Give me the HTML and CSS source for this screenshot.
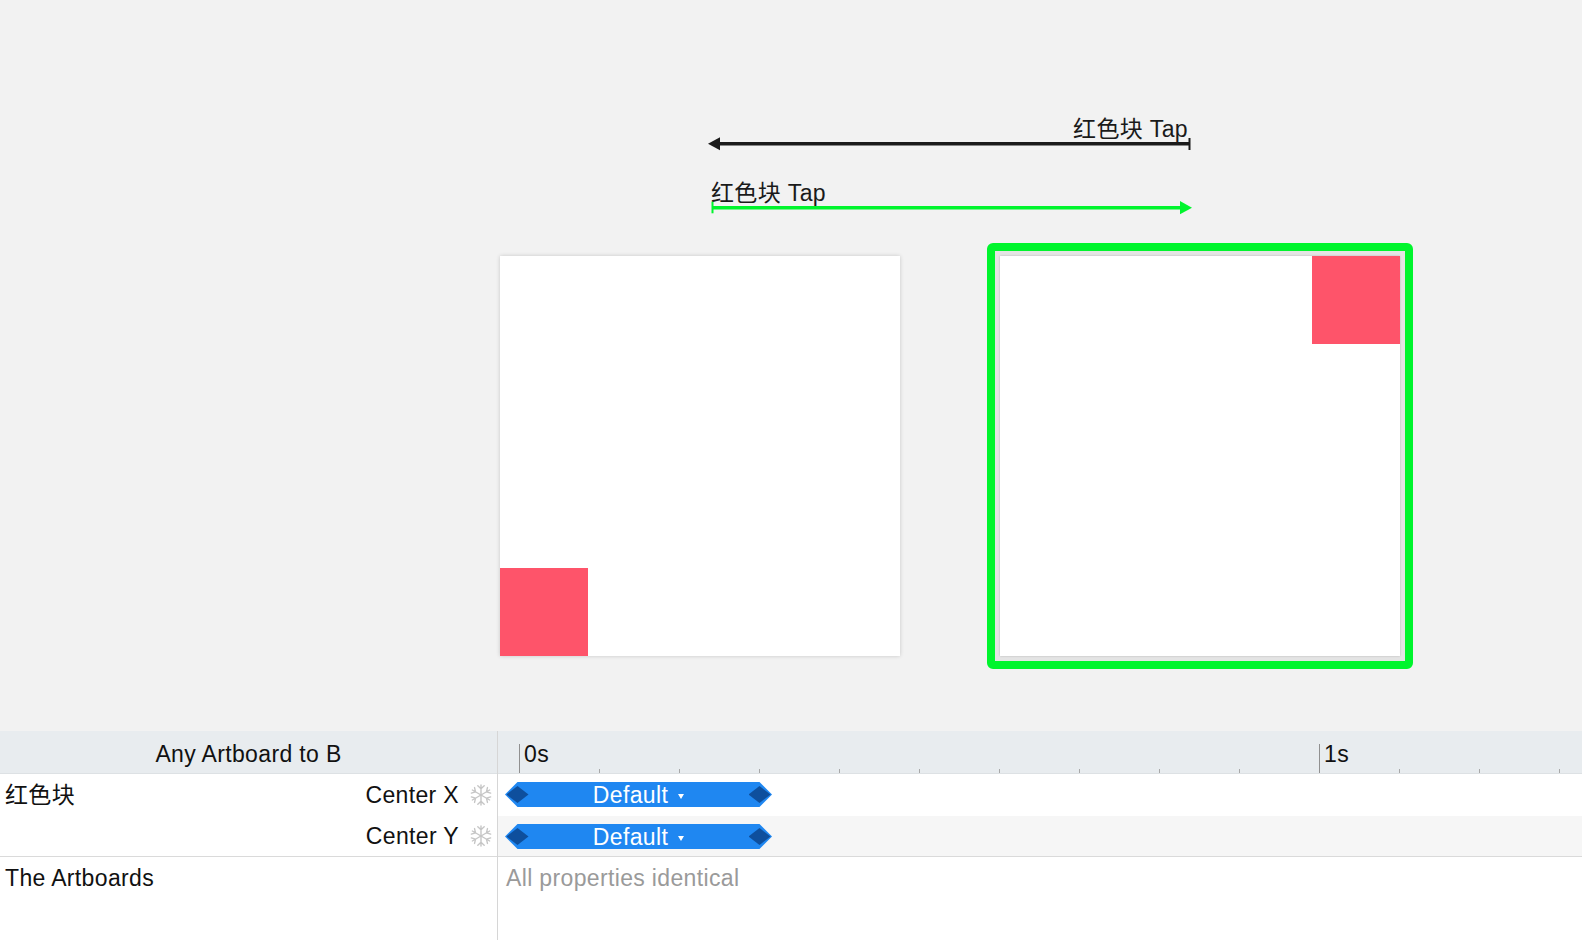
FILE: index.html
```html
<!DOCTYPE html>
<html lang="zh">
<head>
<meta charset="utf-8">
<title>Any Artboard to B</title>
<link rel="stylesheet" href="styles.css">
</head>
<body>
<div class="app">
  <div class="canvas">
    <div class="conn conn-back">
      <div class="conn-label">红色块 Tap</div>
      <svg class="conn-line" width="496" height="14" viewBox="0 0 496 14">
        <line x1="18" y1="6.7" x2="489.5" y2="6.7" stroke="#1b1b1b" stroke-width="3.5"/>
        <polygon points="8,6.7 20,0.2 20,13.2" fill="#1b1b1b"/>
        <line x1="489.5" y1="1" x2="489.5" y2="13" stroke="#1b1b1b" stroke-width="2"/>
      </svg>
    </div>
    <div class="conn conn-fwd">
      <div class="conn-label">红色块 Tap</div>
      <svg class="conn-line" width="496" height="16" viewBox="0 0 496 16">
        <line x1="12.5" y1="1.7" x2="12.5" y2="13.3" stroke="#00f52d" stroke-width="2"/>
        <line x1="12" y1="7.7" x2="482" y2="7.7" stroke="#00f52d" stroke-width="3.5"/>
        <polygon points="492,7.7 480,1.1 480,14.3" fill="#00f52d"/>
      </svg>
    </div>
    <div class="artboard artboard-a"><div class="block"></div></div>
    <div class="ring">
      <div class="artboard artboard-b"><div class="block"></div></div>
    </div>
  </div>

  <div class="timeline">
    <div class="col col-left">
      <div class="head head-title">Any Artboard to B</div>
      <div class="row row-1">
        <span class="layer">红色块</span>
        <span class="prop">Center X
          <svg class="snow" width="22" height="22" viewBox="-11 -11 22 22">
            <g stroke="#c6c6c6" stroke-width="1.4" fill="none" stroke-linecap="round">
              <path d="M0 0V-10M0-6.3L-3.2-9.3M0-6.3L3.2-9.3"/>
              <path transform="rotate(60)" d="M0 0V-10M0-6.3L-3.2-9.3M0-6.3L3.2-9.3"/>
              <path transform="rotate(120)" d="M0 0V-10M0-6.3L-3.2-9.3M0-6.3L3.2-9.3"/>
              <path transform="rotate(180)" d="M0 0V-10M0-6.3L-3.2-9.3M0-6.3L3.2-9.3"/>
              <path transform="rotate(240)" d="M0 0V-10M0-6.3L-3.2-9.3M0-6.3L3.2-9.3"/>
              <path transform="rotate(300)" d="M0 0V-10M0-6.3L-3.2-9.3M0-6.3L3.2-9.3"/>
            </g>
          </svg>
        </span>
      </div>
      <div class="row row-2">
        <span class="layer"></span>
        <span class="prop">Center Y
          <svg class="snow" width="22" height="22" viewBox="-11 -11 22 22">
            <g stroke="#c6c6c6" stroke-width="1.4" fill="none" stroke-linecap="round">
              <path d="M0 0V-10M0-6.3L-3.2-9.3M0-6.3L3.2-9.3"/>
              <path transform="rotate(60)" d="M0 0V-10M0-6.3L-3.2-9.3M0-6.3L3.2-9.3"/>
              <path transform="rotate(120)" d="M0 0V-10M0-6.3L-3.2-9.3M0-6.3L3.2-9.3"/>
              <path transform="rotate(180)" d="M0 0V-10M0-6.3L-3.2-9.3M0-6.3L3.2-9.3"/>
              <path transform="rotate(240)" d="M0 0V-10M0-6.3L-3.2-9.3M0-6.3L3.2-9.3"/>
              <path transform="rotate(300)" d="M0 0V-10M0-6.3L-3.2-9.3M0-6.3L3.2-9.3"/>
            </g>
          </svg>
        </span>
      </div>
      <div class="row row-art">The Artboards</div>
    </div>

    <div class="col col-right">
      <div class="head ruler">
        <div class="sec">0s</div>
        <div class="sec">1s</div>
      </div>
      <div class="row row-1 track">
        <div class="bar"><span class="bar-text">Default</span><i class="caret"></i></div>
      </div>
      <div class="row row-2 track alt">
        <div class="bar"><span class="bar-text">Default</span><i class="caret"></i></div>
      </div>
      <div class="row row-art note">All properties identical</div>
    </div>
  </div>
</div>
</body>
</html>
```

FILE: styles.css
```css
* { box-sizing: border-box; }

html, body {
  margin: 0;
  padding: 0;
}

body {
  width: 1582px;
  height: 940px;
  overflow: hidden;
  font-family: "Liberation Sans", "Noto Sans CJK SC", sans-serif;
  font-size: 23px;
  letter-spacing: 0.35px;
  color: #111;
  background: #f2f2f2;
}

.app {
  display: flex;
  flex-direction: column;
  height: 940px;
}

/* ---------- canvas ---------- */
.canvas {
  position: relative;
  height: 731px;
  flex-shrink: 0;
  background: #f2f2f2;
}

.conn {
  position: absolute;
  left: 700px;
  width: 496px;
  display: flex;
  flex-direction: column;
}

.conn-back { top: 116px; }
.conn-fwd { top: 180px; }

.conn-label {
  height: 26px;
  line-height: 26px;
  white-space: nowrap;
  color: #1a1a1a;
}

.conn-back .conn-label {
  text-align: right;
  padding-right: 8px;
}

.conn-fwd .conn-label {
  padding-left: 11px;
}

.conn-line { display: block; }
.conn-back .conn-line { margin-top: -5px; }
.conn-fwd .conn-line { margin-top: -6px; }

.artboard {
  width: 400px;
  height: 400px;
  background: #fff;
  display: flex;
  box-shadow: 0 0 4px rgba(0, 0, 0, 0.18);
}

.artboard-a {
  position: absolute;
  left: 500px;
  top: 256px;
  align-items: flex-end;
}

.ring {
  position: absolute;
  left: 987px;
  top: 243px;
  width: 426px;
  height: 426px;
  border: 8px solid #00f52d;
  border-radius: 6px;
  padding: 5px;
  background: #e4e4e4;
}

.artboard-b {
  box-shadow: 0 0 2px rgba(0, 0, 0, 0.2);
  justify-content: flex-end;
  align-items: flex-start;
}

.block {
  width: 88px;
  height: 88px;
  background: #fe546a;
}

/* ---------- timeline ---------- */
.timeline {
  flex: 1;
  display: flex;
  background: #fff;
}

.col {
  display: flex;
  flex-direction: column;
}

.col-left {
  width: 498px;
  flex-shrink: 0;
  border-right: 1px solid #d6d6d6;
}

.col-right {
  flex: 1;
  min-width: 0;
  overflow: hidden;
}

.head {
  height: 43px;
  flex-shrink: 0;
  background: #e8ecef;
  border-bottom: 1px solid #dde1e4;
}

.head-title {
  text-align: center;
  line-height: 47px;
}

.ruler {
  display: flex;
  align-items: flex-end;
  padding-left: 21px;
  background-color: #e8ecef;
  background-image: repeating-linear-gradient(to right, #a8a8a8 0 1px, transparent 1px 80px);
  background-size: 100% 4px;
  background-repeat: no-repeat;
  background-position: 21px bottom;
}

.sec {
  width: 800px;
  flex-shrink: 0;
  height: 29px;
  border-left: 1px solid #909090;
  padding-left: 4px;
  line-height: 20px;
}

.row {
  flex-shrink: 0;
}

.row-1 { height: 42px; }
.row-2 {
  height: 41px;
  border-bottom: 1px solid #dadada;
}

.col-left .row-1,
.col-left .row-2 {
  display: flex;
  align-items: center;
  justify-content: space-between;
  padding: 0 5px;
  line-height: 40px;
}

.col-left .row-2 { padding-bottom: 1px; }

.prop {
  display: flex;
  align-items: center;
  gap: 11px;
}

.snow { display: block; }

.row-art {
  flex: 1;
  padding-left: 5px;
  padding-top: 1px;
  line-height: 40px;
}

.note {
  padding-left: 8px;
  color: #9a9a9a;
}

.track {
  padding-top: 8px;
  padding-left: 7px;
}

.alt { background: #f6f6f6; }

.bar {
  position: relative;
  width: 267px;
  height: 25px;
  background: #1f87f1;
  clip-path: polygon(0 50%, 12.5px 0, calc(100% - 12.5px) 0, 100% 50%, calc(100% - 12.5px) 100%, 12.5px 100%);
  display: flex;
  align-items: center;
  justify-content: center;
  color: #fff;
}

.bar::before,
.bar::after {
  content: "";
  position: absolute;
  top: 4px;
  width: 22px;
  height: 17px;
  background: #0e4f9d;
  clip-path: polygon(50% 0, 100% 50%, 50% 100%, 0 50%);
}

.bar::before { left: 1.5px; }
.bar::after { right: 1.5px; }

.bar-text {
  line-height: 25px;
  height: 25px;
  padding-top: 1px;
}

.caret {
  display: block;
  width: 0;
  height: 0;
  margin-left: 10px;
  margin-top: 4px;
  border-left: 3.5px solid transparent;
  border-right: 3.5px solid transparent;
  border-top: 5px solid #fff;
}
```
